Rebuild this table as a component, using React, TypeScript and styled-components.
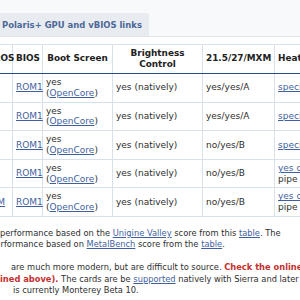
import React from 'react';
import styled, { createGlobalStyle } from 'styled-components';

const Global = createGlobalStyle`
  html, body { margin: 0; padding: 0; background: #ffffff; overflow: hidden; }
  body { font-family: "DejaVu Sans", Verdana, sans-serif; color: #2e2e2e; }
`;

const Page = styled.div`
  width: 360px;
  margin-left: -24px;
`;

const TabBar = styled.div`
  display: flex;
  align-items: flex-end;
  height: 37px;
  box-sizing: border-box;
  padding-left: 18px;
  background: #f8f9fa;
  border-bottom: 1px solid #e1e5ea;
`;

const Tab = styled.div`
  height: 23px;
  display: flex;
  align-items: center;
  padding: 0 7px 0 8px;
  background: #e8ecf1;
  border-radius: 3px 3px 0 0;
  color: #4d6897;
  font-weight: bold;
  font-size: 8.45px;
  white-space: nowrap;
`;

const TableWrap = styled.div`
  margin-top: 7px;
`;

const Table = styled.table`
  border-collapse: collapse;
  table-layout: fixed;
  width: 388px;
  font-size: 9px;
  line-height: 10.8px;
`;

const Th = styled.th`
  padding: 2.5px 3px;
  border: 1px solid #d8e0ea;
  border-bottom: 1px solid #2c4c84;
  font-size: 8.9px;
  line-height: 11.5px;
  font-weight: bold;
  color: #222222;
  text-align: center;
  vertical-align: middle;
  white-space: nowrap;
`;

const Td = styled.td<{ $center?: boolean }>`
  padding: 3px 3px;
  border: 1px solid #d8e0ea;
  color: #2e2e2e;
  text-align: ${(p) => (p.$center ? 'center' : 'left')};
  vertical-align: middle;
  white-space: nowrap;
`;

const A = styled.a`
  color: #3f5f9f;
  text-decoration: underline;
`;

const Notes = styled.div`
  padding-left: 24px;
  margin-top: 11px;
  font-size: 8.3px;
  line-height: 11.4px;
  color: #2e2e2e;
`;

const Note = styled.div`
  margin-bottom: 11.4px;
`;

const NoteLine = styled.div<{ $indent?: number }>`
  white-space: nowrap;
  padding-left: ${(p) => p.$indent ?? 0}px;
`;

const Warn = styled.b`
  color: #c4302f;
`;

type Row = { rom: string; first?: string; mxm: string; heat: 'special' | 'pipe' };

const rows: Row[] = [
  { rom: 'ROM1', mxm: 'yes/yes/A', heat: 'special' },
  { rom: 'ROM1', mxm: 'yes/yes/A', heat: 'special' },
  { rom: 'ROM1', mxm: 'no/yes/B', heat: 'special' },
  { rom: 'ROM1', mxm: 'no/yes/B', heat: 'pipe' },
  { rom: 'ROM1', first: 'ROM', mxm: 'no/yes/B', heat: 'pipe' },
];

export default function App() {
  return (
    <>
      <Global />
      <Page>
        <TabBar>
          <Tab>Polaris+ GPU and vBIOS links</Tab>
        </TabBar>
        <TableWrap>
          <Table>
            <colgroup>
              <col style={{ width: 36 }} />
              <col style={{ width: 30 }} />
              <col style={{ width: 70 }} />
              <col style={{ width: 90 }} />
              <col style={{ width: 72 }} />
              <col style={{ width: 90 }} />
            </colgroup>
            <thead>
              <tr>
                <Th>macOS</Th>
                <Th>BIOS</Th>
                <Th>Boot Screen</Th>
                <Th>
                  Brightness
                  <br />
                  Control
                </Th>
                <Th>21.5/27/MXM</Th>
                <Th style={{ textAlign: 'left' }}>Heatsink</Th>
              </tr>
            </thead>
            <tbody>
              {rows.map((r, i) => (
                <tr key={i}>
                  <Td $center>{r.first ? <A href="#">{r.first}</A> : null}</Td>
                  <Td>
                    <A href="#">{r.rom}</A>
                  </Td>
                  <Td>
                    yes
                    <br />(<A href="#">OpenCore</A>)
                  </Td>
                  <Td>yes (natively)</Td>
                  <Td>{r.mxm}</Td>
                  <Td>
                    {r.heat === 'special' ? (
                      <A href="#">special</A>
                    ) : (
                      <>
                        <A href="#">yes on heat</A>
                        <br />
                        pipe
                      </>
                    )}
                  </Td>
                </tr>
              ))}
            </tbody>
          </Table>
        </TableWrap>
        <Notes>
          <Note>
            <NoteLine>
              performance based on the <A href="#">Unigine Valley</A> score from this{' '}
              <A href="#">table</A>. The
            </NoteLine>
            <NoteLine $indent={0.5}>
              rformance based on <A href="#">MetalBench</A> score from the <A href="#">table</A>.
            </NoteLine>
          </Note>
          <Note>
            <NoteLine $indent={11}>
              are much more modern, but are difficult to source. <Warn>Check the online</Warn>
            </NoteLine>
            <NoteLine>
              <Warn>ined above).</Warn> The cards are be <A href="#">supported</A> natively with
              Sierra and later
            </NoteLine>
            <NoteLine $indent={13}>is currently Monterey Beta 10.</NoteLine>
          </Note>
        </Notes>
      </Page>
    </>
  );
}
